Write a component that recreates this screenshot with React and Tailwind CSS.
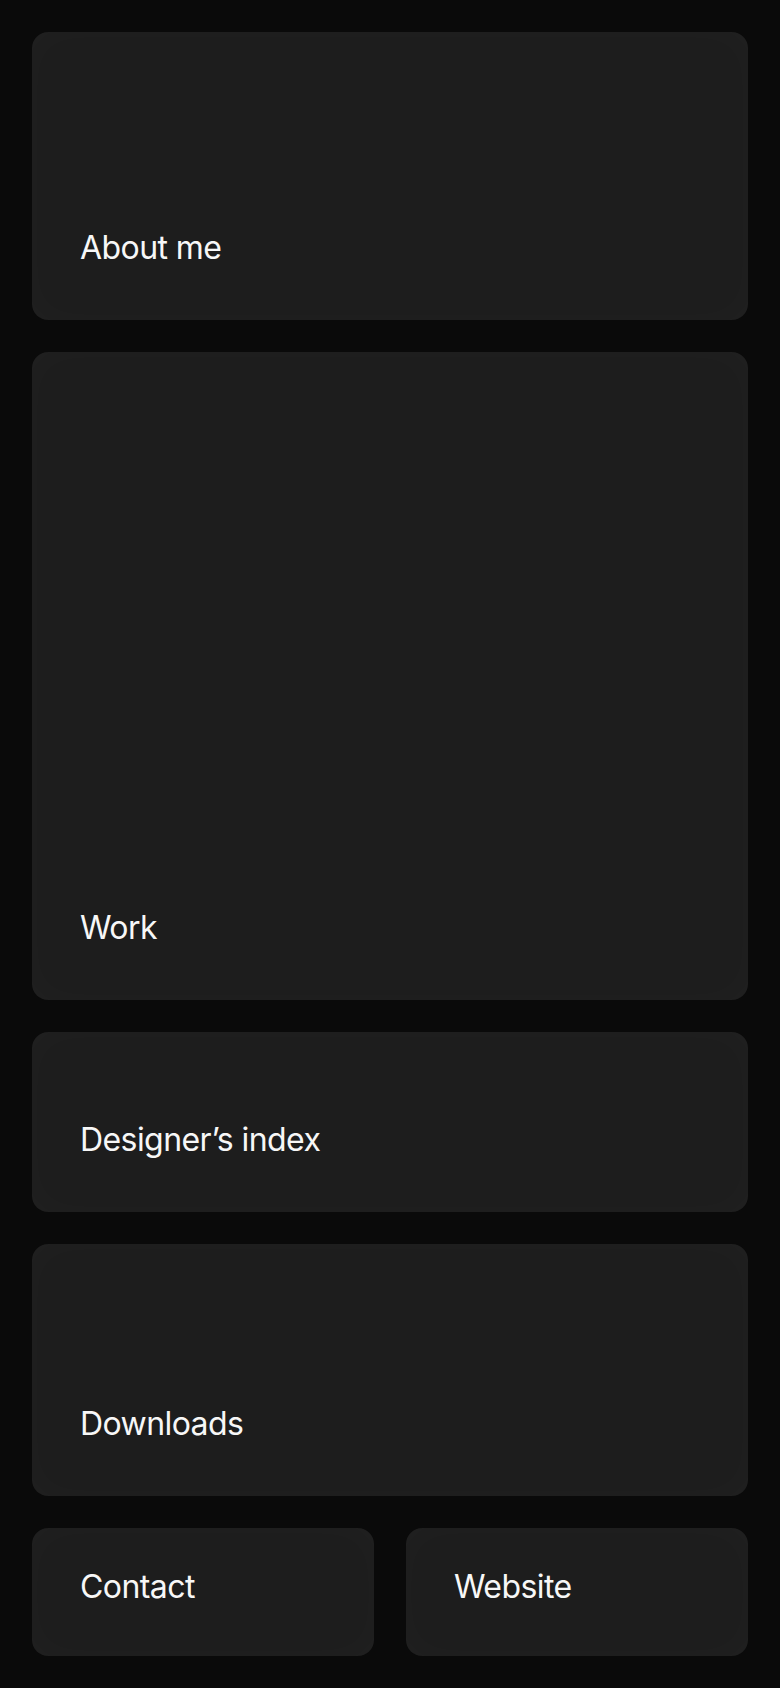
import React from 'react';

const cards = [
  { label: 'About me', height: 'h-[288px]' },
  { label: 'Work', height: 'h-[648px]' },
  { label: 'Designer’s index', height: 'h-[180px]' },
  { label: 'Downloads', height: 'h-[252px]' },
];

const Card = ({ label, className = '' }) => (
  <a
    href="#"
    className={`flex flex-col justify-end rounded-2xl bg-[#1d1d1d] px-12 shadow-[inset_0_0_44px_rgba(255,255,255,0.018)] ${className}`}
  >
    <span className="text-[32px] leading-[48px] tracking-[-0.018em] text-[#f7f7f7]">{label}</span>
  </a>
);

export default function App() {
  return (
    <div
      className="min-h-[1688px] bg-[#0a0a0a] p-8"
      style={{ fontFamily: 'Inter, "Noto Sans", sans-serif' }}
    >
      <div className="flex flex-col gap-8">
        {cards.map((card) => (
          <Card key={card.label} label={card.label} className={`pb-12 ${card.height}`} />
        ))}
        <div className="grid grid-cols-2 gap-8">
          <Card label="Contact" className="h-[128px] pb-[45px]" />
          <Card
            label="Website"
            className="h-[128px] pb-[45px] shadow-[inset_-28px_0_24px_-16px_rgba(255,255,255,0.035),inset_0_0_44px_rgba(255,255,255,0.018)]"
          />
        </div>
      </div>
    </div>
  );
}
